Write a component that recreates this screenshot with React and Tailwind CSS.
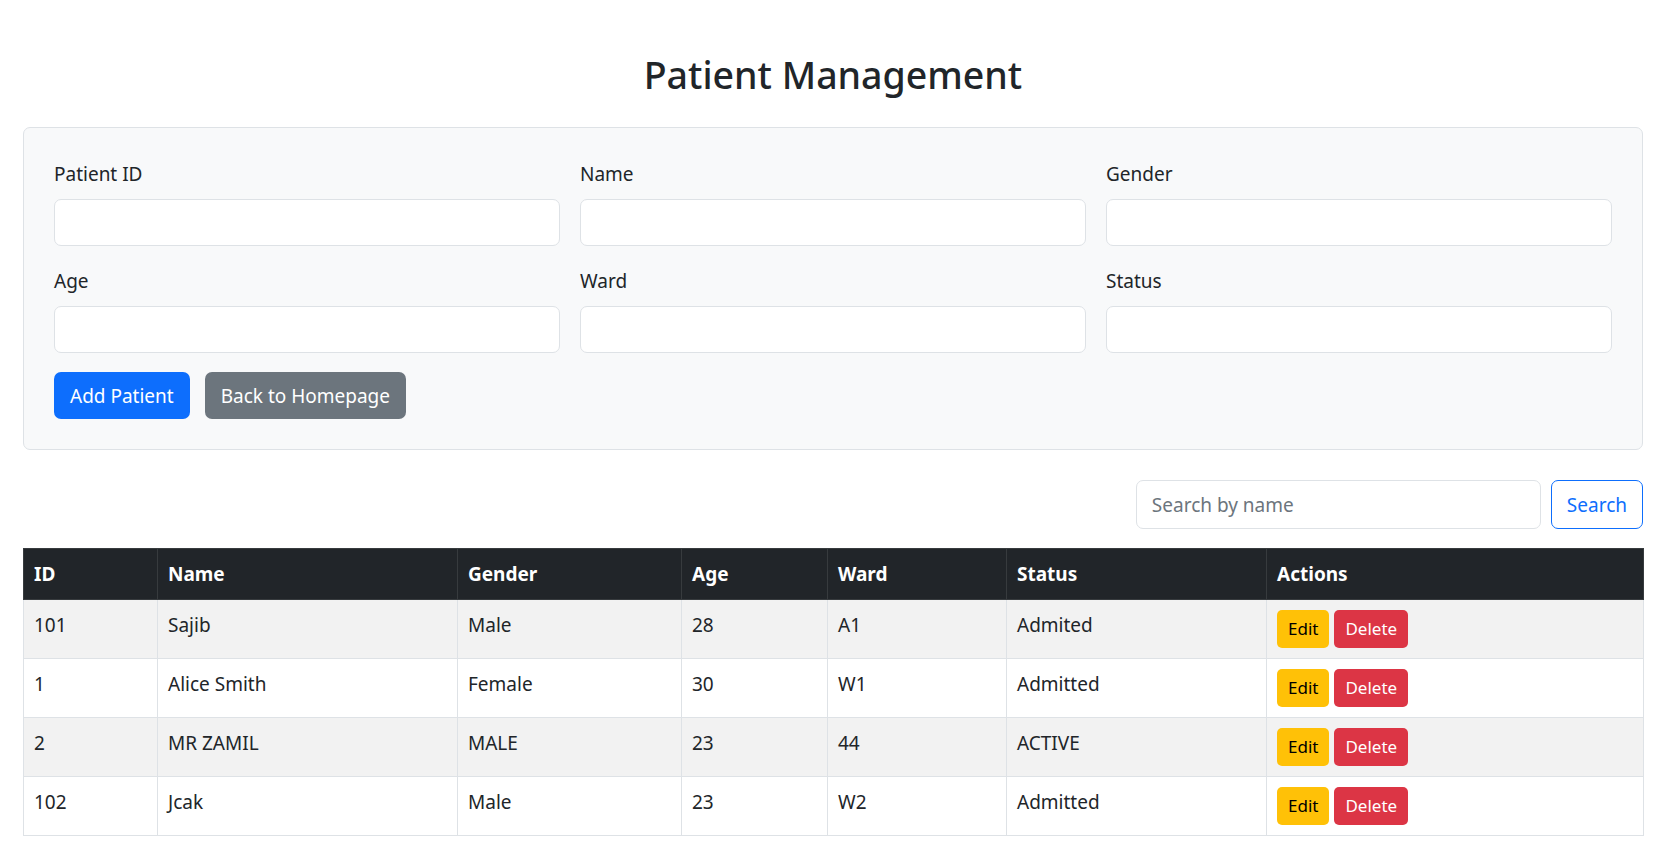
import { useState } from "react";

const fields = [
  { id: "patientId", label: "Patient ID" },
  { id: "name", label: "Name" },
  { id: "gender", label: "Gender" },
  { id: "age", label: "Age" },
  { id: "ward", label: "Ward" },
  { id: "status", label: "Status" },
];

const patients = [
  { id: "101", name: "Sajib", gender: "Male", age: "28", ward: "A1", status: "Admited" },
  { id: "1", name: "Alice Smith", gender: "Female", age: "30", ward: "W1", status: "Admitted" },
  { id: "2", name: "MR ZAMIL", gender: "MALE", age: "23", ward: "44", status: "ACTIVE" },
  { id: "102", name: "Jcak", gender: "Male", age: "23", ward: "W2", status: "Admitted" },
];

const columns = [
  { label: "ID", width: "w-[134px]" },
  { label: "Name", width: "w-[300px]" },
  { label: "Gender", width: "w-[224px]" },
  { label: "Age", width: "w-[146px]" },
  { label: "Ward", width: "w-[179px]" },
  { label: "Status", width: "w-[260px]" },
  { label: "Actions", width: "w-[377px]" },
];

export default function App() {
  const [form, setForm] = useState({});
  const [search, setSearch] = useState("");

  return (
    <div className="min-h-screen bg-white px-[23px] pt-[51px] font-['Noto_Sans',sans-serif] text-[19px] leading-[30px] text-[#212529]">
      <h2 className="mb-[28px] text-center text-[37.5px] font-medium leading-[48px]">
        Patient Management
      </h2>

      <div className="rounded-[7px] border border-[#dee2e6] bg-[#f8f9fa] px-[30px] pb-[30px] pt-[31px]">
        <div className="grid grid-cols-3 gap-x-[20px] gap-y-[20px]">
          {fields.map((f) => (
            <div key={f.id}>
              <label htmlFor={f.id} className="mb-[10px] block">
                {f.label}
              </label>
              <input
                id={f.id}
                value={form[f.id] || ""}
                onChange={(e) => setForm({ ...form, [f.id]: e.target.value })}
                className="block h-[47px] w-full rounded-[7px] border border-[#dee2e6] bg-white px-[15px] outline-none"
              />
            </div>
          ))}
        </div>

        <div className="mt-[19px] flex">
          <button className="h-[47px] rounded-[7px] bg-[#0d6efd] px-[16px] text-white">
            Add Patient
          </button>
          <button className="ml-[15px] h-[47px] rounded-[7px] bg-[#6c757d] px-[16px] text-white">
            Back to Homepage
          </button>
        </div>
      </div>

      <div className="mt-[30px] flex justify-end gap-[10px]">
        <input
          value={search}
          onChange={(e) => setSearch(e.target.value)}
          placeholder="Search by name"
          className="h-[49px] w-[405px] rounded-[7px] border border-[#dee2e6] bg-white px-[15px] outline-none placeholder:text-[#6c757d]"
        />
        <button className="h-[49px] rounded-[7px] border border-[#0d6efd] bg-white px-[15px] text-[#0d6efd]">
          Search
        </button>
      </div>

      <table className="mt-[19px] w-full table-fixed border-collapse">
        <thead>
          <tr className="bg-[#212529] text-white">
            {columns.map((c) => (
              <th
                key={c.label}
                className={`${c.width} border border-[#373b3e] px-[10px] py-[10px] text-left font-bold`}
              >
                {c.label}
              </th>
            ))}
          </tr>
        </thead>
        <tbody>
          {patients.map((p, i) => (
            <tr key={p.id} className={i % 2 === 0 ? "bg-[#f2f2f2]" : "bg-white"}>
              {[p.id, p.name, p.gender, p.age, p.ward, p.status].map((v, j) => (
                <td key={j} className="border border-[#dee2e6] px-[10px] py-[10px] align-top">
                  {v}
                </td>
              ))}
              <td className="border border-[#dee2e6] px-[10px] py-[10px] align-top">
                <div className="flex">
                  <button className="h-[38px] rounded-[5px] bg-[#ffc107] px-[11px] text-[17px] text-black">
                    Edit
                  </button>
                  <button className="ml-[5px] h-[38px] rounded-[5px] bg-[#dc3545] px-[11px] text-[17px] text-white">
                    Delete
                  </button>
                </div>
              </td>
            </tr>
          ))}
        </tbody>
      </table>
    </div>
  );
}
